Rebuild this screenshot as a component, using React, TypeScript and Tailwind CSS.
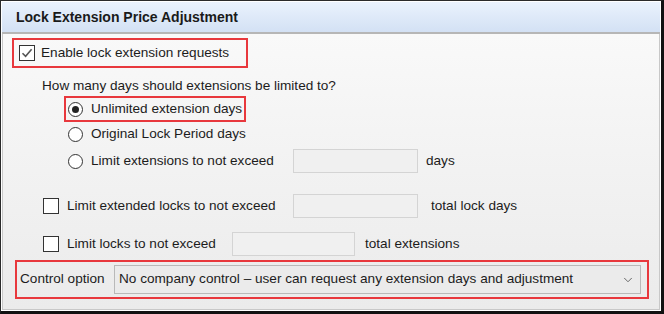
import { ChevronDown } from "lucide-react";

const Check = ({ checked }: { checked?: boolean }) => (
  <span className="w-[16px] h-[16px] border border-[#333333] bg-white flex items-center justify-center shrink-0">
    {checked && (
      <svg width="12" height="12" viewBox="0 0 12 12">
        <path d="M1.5 6.2 L4.6 9.3 L10.6 2.2" fill="none" stroke="#555555" strokeWidth="1.6" />
      </svg>
    )}
  </span>
);

const Radio = ({ checked }: { checked?: boolean }) => (
  <span className="w-[15px] h-[15px] rounded-full border border-[#333333] bg-white flex items-center justify-center shrink-0">
    {checked && <span className="w-[7px] h-[7px] rounded-full bg-[#222222]" />}
  </span>
);

const Field = ({ w }: { w: string }) => (
  <span className={`${w} h-[24px] border border-[#d4d4d4] bg-[#f0f0f0] shrink-0`} />
);

export default function App() {
  return (
    <div className="w-[664px] h-[314px] bg-white font-['Liberation_Sans',Arial,sans-serif] text-[13.6px] text-[#1c1c1c]">
      <div className="w-full h-full border-l border-t border-[#2a2a2a] border-r-[3px] border-b-[3px] border-r-[#111111] border-b-[#111111] flex flex-col p-[1px]">
        {/* Header */}
        <div className="h-[32px] shrink-0 bg-gradient-to-b from-[#eaf2fd] to-[#d3e1f4] border-b-2 border-[#b6b6b6] flex items-center pl-[14px]">
          <span className="text-[14px] font-bold text-[#1a1a1a]">Lock Extension Price Adjustment</span>
        </div>

        {/* Body */}
        <div className="flex-1 bg-gradient-to-b from-[#f9f9f9] to-[#ebebeb] border-l border-r border-b border-[#c8c8c8] flex flex-col">
          <div className="ml-[9px] mt-[4px] h-[30px] w-[236px] border-2 border-[#e8383d] flex items-center gap-[6px] pl-[5px]">
            <Check checked />
            <span>Enable lock extension requests</span>
          </div>

          <div className="mt-[8px] h-[20px] pl-[39px] flex items-center">
            How many days should extensions be limited to?
          </div>

          <div className="ml-[61px] h-[26px] w-[182px] border-2 border-[#e8383d] flex items-center gap-[8px] pl-[2px]">
            <Radio checked />
            <span>Unlimited extension days</span>
          </div>

          <div className="ml-[63px] h-[24px] flex items-center gap-[8px] pl-[2px]">
            <Radio />
            <span>Original Lock Period days</span>
          </div>

          <div className="ml-[63px] mt-[3px] h-[24px] flex items-center pl-[2px]">
            <Radio />
            <span className="ml-[8px] w-[202px]">Limit extensions to not exceed</span>
            <Field w="w-[125px]" />
            <span className="ml-[8px]">days</span>
          </div>

          <div className="ml-[40px] mt-[21px] h-[24px] flex items-center">
            <Check />
            <span className="ml-[8px] w-[226px]">Limit extended locks to not exceed</span>
            <Field w="w-[125px]" />
            <span className="ml-[13px]">total lock days</span>
          </div>

          <div className="ml-[40px] mt-[14px] h-[24px] flex items-center">
            <Check />
            <span className="ml-[8px] w-[165px]">Limit locks to not exceed</span>
            <Field w="w-[123px]" />
            <span className="ml-[10px]">total extensions</span>
          </div>

          <div className="ml-[12px] mt-[4px] h-[39px] w-[634px] border-2 border-[#e8383d] flex items-center pl-[3px] pr-[6px]">
            <span className="w-[94px]">Control option</span>
            <div className="flex-1 h-[29px] border border-[#b9b9b9] bg-[#ebebeb] flex items-center justify-between pl-[4px] pr-[5px]">
              <span>No company control – user can request any extension days and adjustment</span>
              <ChevronDown size={14} strokeWidth={1.5} className="text-[#555555]" />
            </div>
          </div>
        </div>
      </div>
    </div>
  );
}
